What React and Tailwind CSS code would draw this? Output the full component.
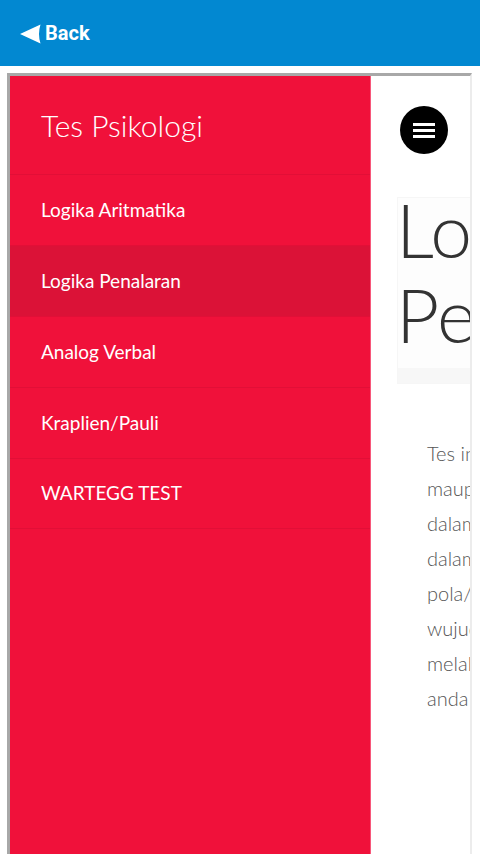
export default function App() {
  const items = [
    'Logika Aritmatika',
    'Logika Penalaran',
    'Analog Verbal',
    'Kraplien/Pauli',
    'WARTEGG TEST',
  ]

  const lines = [
    'Tes ini digunakan untuk mengukur',
    'maupun kemampuan seseorang',
    'dalam berpikir secara logis dan',
    'dalam menarik kesimpulan dari',
    'pola/urutan yang diberikan dalam',
    'wujud angka maupun gambar',
    'melalui soal-soal yang harus',
    'anda kerjakan dengan teliti.',
  ]

  return (
    <div className="h-[854px] w-[480px] overflow-hidden bg-white font-['Lato',sans-serif]">
      {/* top bar */}
      <header className="flex h-[66px] items-center bg-[#0288d1] pl-[20px] font-['Roboto',sans-serif] text-white">
        <svg width="21" height="20" viewBox="0 0 21 20" className="mr-[4px] mt-[1px]">
          <path d="M0 10 L20.5 0.5 Q17.5 10 20.5 19.5 Z" fill="#fff" />
        </svg>
        <span className="text-[20px] font-bold">Back</span>
      </header>

      {/* frame */}
      <div className="ml-[7px] mt-[7px] flex h-[790px] w-[465px] border-l-[3px] border-r-2 border-t-[3px] border-l-[#a8a8a8] border-r-[#ececec] border-t-[#a8a8a8]">
        {/* side menu */}
        <aside className="flex w-[361px] shrink-0 flex-col border-r border-r-[#f7577a] bg-[#f0113a] text-white">
          <div className="flex h-[98px] items-center pl-[31px] text-[30px] font-light">
            Tes Psikologi
          </div>
          {items.map((item, i) => (
            <div
              key={item}
              className={
                'flex h-[71px] items-center border-t border-t-[#e20f37] pl-[31px] text-[19px] ' +
                (i === 1 ? 'bg-[#db1237]' : '') +
                (i === items.length - 1 ? ' border-b border-b-[#e20f37]' : '')
              }
            >
              {item}
            </div>
          ))}
        </aside>

        {/* page content */}
        <main className="flex-1 overflow-hidden bg-white">
          <div className="pl-[29px] pt-[30px]">
            <div className="flex h-[48px] w-[48px] items-center justify-center rounded-full bg-black">
              <div className="flex flex-col gap-[3px]">
                <span className="block h-[3px] w-[22px] bg-white" />
                <span className="block h-[3px] w-[22px] bg-white" />
                <span className="block h-[3px] w-[22px] bg-white" />
              </div>
            </div>
          </div>

          <div className="ml-[26px] mt-[43px] w-[200px] overflow-hidden border border-[#f6f6f6] bg-[#fdfdfd]">
            <h1 className="-ml-[2px] -mt-[11px] whitespace-nowrap text-[75px] font-light leading-[85px] text-[#333]">
              Logika
              <br />
              Penalaran
            </h1>
            <div className="mt-[11px] h-[15px] bg-[#f7f7f7]" />
          </div>

          <div className="ml-[56px] mt-[52px] text-[20px] font-light leading-[35px] text-[#555]">
            {lines.map((l) => (
              <p key={l} className="whitespace-nowrap">
                {l}
              </p>
            ))}
          </div>
        </main>
      </div>
    </div>
  )
}
